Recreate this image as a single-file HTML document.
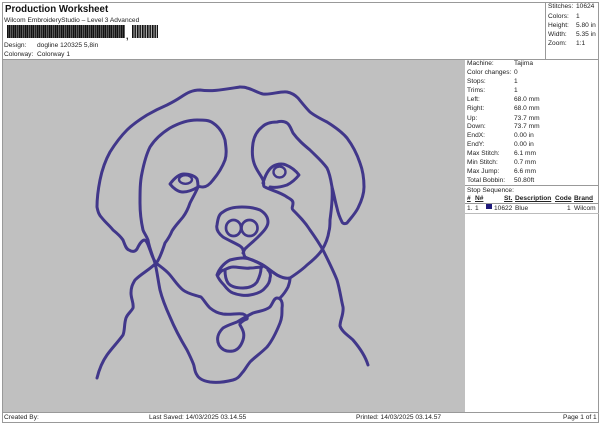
<!DOCTYPE html>
<html><head><meta charset="utf-8"><style>
html,body{margin:0;padding:0;background:#fff}
#p{position:relative;width:600px;height:424px;overflow:hidden;background:#fff;font-family:"Liberation Sans",sans-serif;font-size:6.6px;color:#222;filter:blur(.3px)}
#p span{position:absolute;white-space:nowrap;line-height:8px}
.l{position:absolute;background:#999}
u{text-decoration:underline;font-weight:bold}
</style></head><body><div id="p">
<div class="l" style="left:2px;top:2px;width:597px;height:1px"></div>
<div class="l" style="left:2px;top:2px;width:1px;height:420px"></div>
<div class="l" style="left:598px;top:2px;width:1px;height:420px"></div>
<div class="l" style="left:2px;top:59px;width:597px;height:1px"></div>
<div class="l" style="left:545px;top:2px;width:1px;height:57px"></div>
<div class="l" style="left:2px;top:412px;width:597px;height:1px"></div>
<div class="l" style="left:2px;top:422px;width:597px;height:1px"></div>
<div style="position:absolute;left:3px;top:60px;width:462px;height:352px;background:#c0c0c0"></div>
<span style="left:5px;top:4px;font-size:9.7px;font-weight:bold;line-height:11px;color:#111">Production Worksheet</span>
<span style="left:4px;top:17px">Wilcom EmbroideryStudio – Level 3 Advanced</span>
<div style="position:absolute;left:7px;top:25px;width:118px;height:13px;background:repeating-linear-gradient(90deg,#111 0,#111 1.500px,#777 1.500px,#777 2px,#111 2px,#111 3px,#999 3px,#999 3.500px,#222 3.500px,#222 5.500px,#888 5.500px,#888 6px)"></div>
<span style="left:126px;top:32px;font-weight:bold;font-size:9px">,</span>
<div style="position:absolute;left:132px;top:25px;width:26px;height:13px;background:repeating-linear-gradient(90deg,#111 0,#111 1.500px,#aaa 1.500px,#aaa 2.500px,#222 2.500px,#222 4px,#aaa 4px,#aaa 5px)"></div>
<span style="left:4px;top:42px">Design:</span><span style="left:37px;top:42px">dogline 120325 5,8in</span>
<span style="left:4px;top:51px">Colorway:</span><span style="left:37px;top:51px">Colorway 1</span>
<span style="left:548px;top:3px">Stitches:</span><span style="left:576px;top:3px">10624</span>
<span style="left:548px;top:13px">Colors:</span><span style="left:576px;top:13px">1</span>
<span style="left:548px;top:22px">Height:</span><span style="left:576px;top:22px">5.80 in</span>
<span style="left:548px;top:31px">Width:</span><span style="left:576px;top:31px">5.35 in</span>
<span style="left:548px;top:40px">Zoom:</span><span style="left:576px;top:40px">1:1</span>
<span style="left:467px;top:60px">Machine:</span><span style="left:514px;top:60px">Tajima</span>
<span style="left:467px;top:69px">Color changes:</span><span style="left:514px;top:69px">0</span>
<span style="left:467px;top:78px">Stops:</span><span style="left:514px;top:78px">1</span>
<span style="left:467px;top:87px">Trims:</span><span style="left:514px;top:87px">1</span>
<span style="left:467px;top:96px">Left:</span><span style="left:514px;top:96px">68.0 mm</span>
<span style="left:467px;top:105px">Right:</span><span style="left:514px;top:105px">68.0 mm</span>
<span style="left:467px;top:115px">Up:</span><span style="left:514px;top:115px">73.7 mm</span>
<span style="left:467px;top:123px">Down:</span><span style="left:514px;top:123px">73.7 mm</span>
<span style="left:467px;top:132px">EndX:</span><span style="left:514px;top:132px">0.00 in</span>
<span style="left:467px;top:141px">EndY:</span><span style="left:514px;top:141px">0.00 in</span>
<span style="left:467px;top:150px">Max Stitch:</span><span style="left:514px;top:150px">6.1 mm</span>
<span style="left:467px;top:159px">Min Stitch:</span><span style="left:514px;top:159px">0.7 mm</span>
<span style="left:467px;top:168px">Max Jump:</span><span style="left:514px;top:168px">6.6 mm</span>
<span style="left:467px;top:177px">Total Bobbin:</span><span style="left:514px;top:177px">50.80ft</span>
<div class="l" style="left:465px;top:185px;width:134px;height:1px"></div>
<span style="left:467px;top:187px">Stop Sequence:</span>
<span style="left:467px;top:195px"><u>#</u></span><span style="left:475px;top:195px"><u>N#</u></span>
<span style="left:504px;top:195px"><u>St.</u></span><span style="left:515px;top:195px"><u>Description</u></span>
<span style="left:555px;top:195px"><u>Code</u></span><span style="left:574px;top:195px"><u>Brand</u></span>
<div class="l" style="left:465px;top:203px;width:134px;height:1px"></div>
<span style="left:467px;top:205px">1.</span><span style="left:475px;top:205px">1</span>
<div style="position:absolute;left:486px;top:204px;width:6px;height:5px;background:#1f1a7a"></div>
<span style="left:494px;top:205px">10622</span><span style="left:515px;top:205px">Blue</span>
<span style="left:567px;top:205px">1</span><span style="left:574px;top:205px">Wilcom</span>
<div class="l" style="left:465px;top:213px;width:134px;height:1px;background:#bbb"></div>
<span style="left:4px;top:414px">Created By:</span>
<span style="left:149px;top:414px">Last Saved: 14/03/2025 03.14.55</span>
<span style="left:356px;top:414px">Printed: 14/03/2025 03.14.57</span>
<span style="left:563px;top:414px">Page 1 of 1</span>
<svg width="600" height="424" style="position:absolute;left:0;top:0" fill="none" stroke="#41378a" stroke-width="3" stroke-linecap="round" stroke-linejoin="round">
<path d="M240 87C226 89 213 92 200 90C192 90 187 93 181 97C175 101 171 103 167 105C160 108 154 111 147 115C139 120 133 124 127 130C120 137 115 144 110 152C105 161 102 170 100 180C98 190 97 198 97 207C98 212 99 215 102 218C106 223 110 226 113 230C118 234 121 237 123 240C125 245 126 249 129 250C132 252 135 252 137 249C139 245 141 241 144 240C147 240 148 245 150 250C152 255 153 259 156 263C161 267 166 270 170 275C175 281 178 286 183 290C188 294 195 295 201 297C204 300 206 304 210 308C215 312 218 313 223 314C230 315 238 313 243 314C246 315 248 317 247 319C244 320 239 323 240 325C243 330 245 334 243 340C241 346 238 350 233 351C227 352 222 350 219 345C216 339 218 333 223 328C228 325 232 324 237 322C242 319 247 316 253 313C259 311 265 311 270 307C273 303 274 298 277 298C281 298 283 302 282 308C282 314 282 318 280 323C276 333 272 341 267 347C261 353 255 357 250 362C246 367 245 370 242 373C239 377 237 379 233 380C225 382 217 383 210 382C204 381 199 379 197 375C194 371 195 367 193 363C191 358 189 354 187 350C181 340 175 329 170 317C165 306 162 298 160 290C158 280 157 271 155 263C152 254 149 247 148 240C146 235 144 233 143 230C141 221 140 212 140 203C140 192 140 182 142 173C144 163 146 155 150 147C155 139 162 133 170 128C179 123 188 120 197 120C204 120 209 120 213 123C219 127 223 133 225 140C226 147 227 154 225 160C222 168 218 174 213 180C210 184 207 187 203 187C200 187 199 186 198 187C196 192 193 197 190 203C188 209 186 213 183 217C179 222 175 226 172 231C170 236 168 239 165 243C163 249 160 258 157 262C151 269 142 273 135 280C132 285 131 288 131 293C131 299 134 303 133 308C131 312 128 313 126 318C124 324 125 330 123 335C118 342 112 348 107 355C102 362 99 370 97 378"/>
<path d="M240 87C243 87 245 87 247 88C252 89 258 93 263 94C271 95 280 91 287 92C292 93 295 95 298 98C302 103 306 108 310 112C315 116 321 119 327 122C335 127 342 132 347 138C353 146 357 154 360 163C363 171 364 179 364 187C364 195 361 202 358 208C355 214 350 219 347 223C345 224 343 224 342 222C340 218 338 213 337 208C335 201 334 194 332 187C331 181 330 174 327 168C322 161 316 156 310 150C304 145 298 140 293 133C291 129 290 125 287 123C284 121 281 121 277 122C271 122 266 123 262 127C257 131 254 137 253 143C252 150 252 157 254 163C256 170 261 175 263 180C265 184 262 186 265 187C270 190 280 192 287 197C290 199 293 200 293 203C293 207 291 208 293 210C299 216 305 222 310 230C315 237 319 243 323 250C328 260 333 270 337 280C340 290 341 299 343 307C344 314 340 320 340 326C342 332 349 336 353 340C359 347 365 355 368 365"/>
<path d="M332 187C333 200 331 212 330 220C330 225 330 228 329 231C328 238 325 245 322 250C318 256 312 261 307 265C302 270 296 274 290 278C285 279 281 277 277 275C272 272 268 268 263 265C258 262 251 260 245 257C243 254 244 252 243 250C243 248 241 247 240 246C235 243 228 240 223 237C218 233 216 229 217 225C218 218 219 214 223 212C228 208 235 207 242 207C249 207 255 208 260 210C265 213 268 217 268 222C268 227 263 232 258 237C254 241 250 244 247 247C244 249 244 251 243 253"/>
<path d="M226 228a7.500 8 0 0 1 15 0a7.500 8 0 0 1-15 0M241.500 228a8 8 0 0 1 16 0a8 8 0 0 1-16 0" stroke-width="2.700"/>
<path d="M243 258C238 258 234 259 230 260C224 263 219 269 217 275C219 280 222 283 224 285C227 289 230 292 233 293C238 295 245 296 250 295C256 294 262 292 265 288C268 285 270 282 270 278C271 275 270 272 268 270"/>
<path d="M243 258C248 258 253 260 257 262C261 264 264 266 267 268C271 271 274 273 277 275"/>
<path d="M218 275C220 272 222 270 224 270C228 268 230 267 233 267C239 267 245 269 250 268C255 268 259 267 262 267"/>
<path d="M225 270C225 276 226 280 228 283C231 287 237 288 243 288C249 288 254 286 257 282C259 278 261 273 261 268"/>
<path d="M290 278C290 282 289 284 288 287C286 291 283 295 280 298"/>
<path d="M170 184C173 180 178 174 184 174C190 174 195 176 197 179C198 182 198 185 198 187C193 190 188 192 183 192C178 192 173 188 170 184Z"/>
<ellipse cx="185.500" cy="179.500" rx="6.500" ry="4.300" stroke-width="2.400"/>
<path d="M263 183C265 176 268 170 272 167C276 164 282 163 286 165C291 167 296 171 299 175C295 180 291 183 287 185C281 187 275 188 270 187"/>
<ellipse cx="279.500" cy="172" rx="6" ry="5.500" stroke-width="2.400"/>
</svg>
</div></body></html>
